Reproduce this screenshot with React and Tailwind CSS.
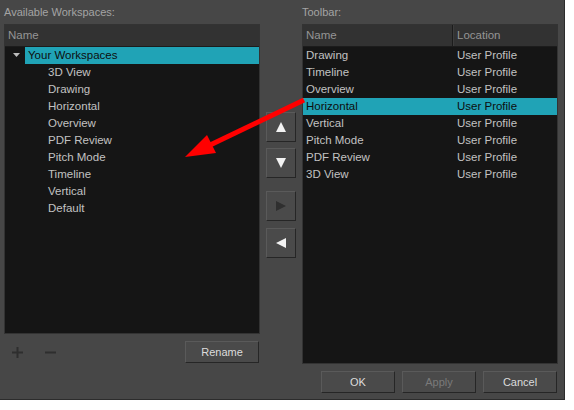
import React from "react";

const font = { fontFamily: '"Liberation Sans", Arial, sans-serif' };

function TriBtn({ dir, disabled }) {
  const color = disabled ? "#2f2f2f" : "#f2f2f2";
  const pts = {
    up: "5,0 10,10 0,10",
    down: "0,0 10,0 5,10",
    right: "0,0 10,5 0,10",
    left: "10,0 10,10 0,5",
  }[dir];
  return (
    <div className="w-[30px] h-[30px] flex items-center justify-center bg-[#4a4a4a] border border-t-[#5a5a5a] border-l-[#5a5a5a] border-r-[#262626] border-b-[#262626]">
      <svg width="10" height="10" viewBox="0 0 10 10">
        <polygon points={pts} fill={color} />
      </svg>
    </div>
  );
}

function Btn({ children, disabled, w = "w-[74px]" }) {
  return (
    <div
      className={`${w} h-[22px] flex items-center justify-center text-[11px] bg-[#4a4a4a] border border-t-[#5a5a5a] border-l-[#5a5a5a] border-r-[#262626] border-b-[#262626] ${
        disabled ? "text-[#7a7a7a]" : "text-[#dcdcdc]"
      }`}
    >
      {children}
    </div>
  );
}

export default function App() {
  const tree = [
    "3D View",
    "Drawing",
    "Horizontal",
    "Overview",
    "PDF Review",
    "Pitch Mode",
    "Timeline",
    "Vertical",
    "Default",
  ];
  const toolbar = [
    "Drawing",
    "Timeline",
    "Overview",
    "Horizontal",
    "Vertical",
    "Pitch Mode",
    "PDF Review",
    "3D View",
  ];
  return (
    <div className="w-[574px] h-[410px] bg-white" style={font}>
      <div className="relative w-[565px] h-[400px] bg-[#474747] border-r border-b border-[#2c2c2c] flex">
        {/* Left column */}
        <div className="ml-[4px] w-[256px] flex flex-col">
          <div className="h-[24px] pt-[4px] text-[11px] leading-[16px] text-[#a4a4a4]">
            Available Workspaces:
          </div>
          <div className="h-[310px] bg-[#151515] border border-[#333333] flex flex-col">
            <div className="h-[22px] bg-[#323232] border-b border-[#1c1c1c] flex items-center pl-[3px] text-[11.5px] text-[#959595]">
              Name
            </div>
            <div className="flex h-[17px] items-center">
              <div className="w-[20px] flex justify-center pl-[2px]">
                <svg width="7" height="5" viewBox="0 0 7 5">
                  <polygon points="0,0 7,0 3.5,4" fill="#bdbdbd" />
                </svg>
              </div>
              <div className="flex-1 h-full bg-[#20a3b6] flex items-center pl-[3px] text-[11.5px] text-[#0e0e0e]">
                Your Workspaces
              </div>
            </div>
            {tree.map((t) => (
              <div
                key={t}
                className="h-[17px] flex items-center pl-[43px] text-[11.5px] text-[#c2c2c2]"
              >
                {t}
              </div>
            ))}
          </div>
          <div className="mt-[7px] h-[22px] flex items-center">
            <div className="flex items-center gap-[22px] pl-[8px]">
              <svg width="11" height="11" viewBox="0 0 11 11">
                <rect x="0" y="4.5" width="11" height="2" fill="#2e2e2e" />
                <rect x="4.5" y="0" width="2" height="11" fill="#2e2e2e" />
              </svg>
              <svg width="11" height="11" viewBox="0 0 11 11">
                <rect x="0" y="4.5" width="11" height="2" fill="#2e2e2e" />
              </svg>
            </div>
            <div className="ml-auto mr-[1px]">
              <Btn>Rename</Btn>
            </div>
          </div>
        </div>

        {/* Middle column */}
        <div className="w-[42px] pl-[6px] pt-[112px] flex flex-col">
          <TriBtn dir="up" />
          <div className="mt-[6px]">
            <TriBtn dir="down" />
          </div>
          <div className="mt-[13px]">
            <TriBtn dir="right" disabled />
          </div>
          <div className="mt-[7px]">
            <TriBtn dir="left" />
          </div>
        </div>

        {/* Right column */}
        <div className="w-[256px] flex flex-col">
          <div className="h-[24px] pt-[4px] text-[11px] leading-[16px] text-[#a4a4a4]">
            Toolbar:
          </div>
          <div className="h-[340px] bg-[#151515] border border-[#333333] flex flex-col">
            <div className="h-[22px] bg-[#323232] border-b border-[#1c1c1c] flex text-[11.5px] text-[#959595]">
              <div className="w-[150px] border-r border-[#1c1c1c] flex items-center pl-[3px]">
                Name
              </div>
              <div className="flex-1 flex items-center pl-[3px] border-l border-[#3c3c3c]">
                Location
              </div>
            </div>
            {toolbar.map((t) => {
              const sel = t === "Horizontal";
              return (
                <div
                  key={t}
                  className={`h-[17px] flex items-center text-[11.5px] ${
                    sel ? "bg-[#20a3b6] text-[#0e0e0e]" : "text-[#c2c2c2]"
                  }`}
                >
                  <div className="w-[150px] pl-[3px]">{t}</div>
                  <div className="flex-1 pl-[4px]">User Profile</div>
                </div>
              );
            })}
          </div>
          <div className="mt-[7px] flex justify-end gap-[7px] pr-[1px]">
            <Btn>OK</Btn>
            <Btn disabled>Apply</Btn>
            <Btn>Cancel</Btn>
          </div>
        </div>

        {/* Red arrow overlay */}
        <svg
          className="absolute left-0 top-0 pointer-events-none"
          width="565"
          height="400"
          viewBox="0 0 565 400"
        >
          <line x1="304" y1="100" x2="206" y2="147" stroke="#ff0000" strokeWidth="5" />
          <polygon points="185,157 216,153 207,135" fill="#ff0000" />
        </svg>
      </div>
    </div>
  );
}
